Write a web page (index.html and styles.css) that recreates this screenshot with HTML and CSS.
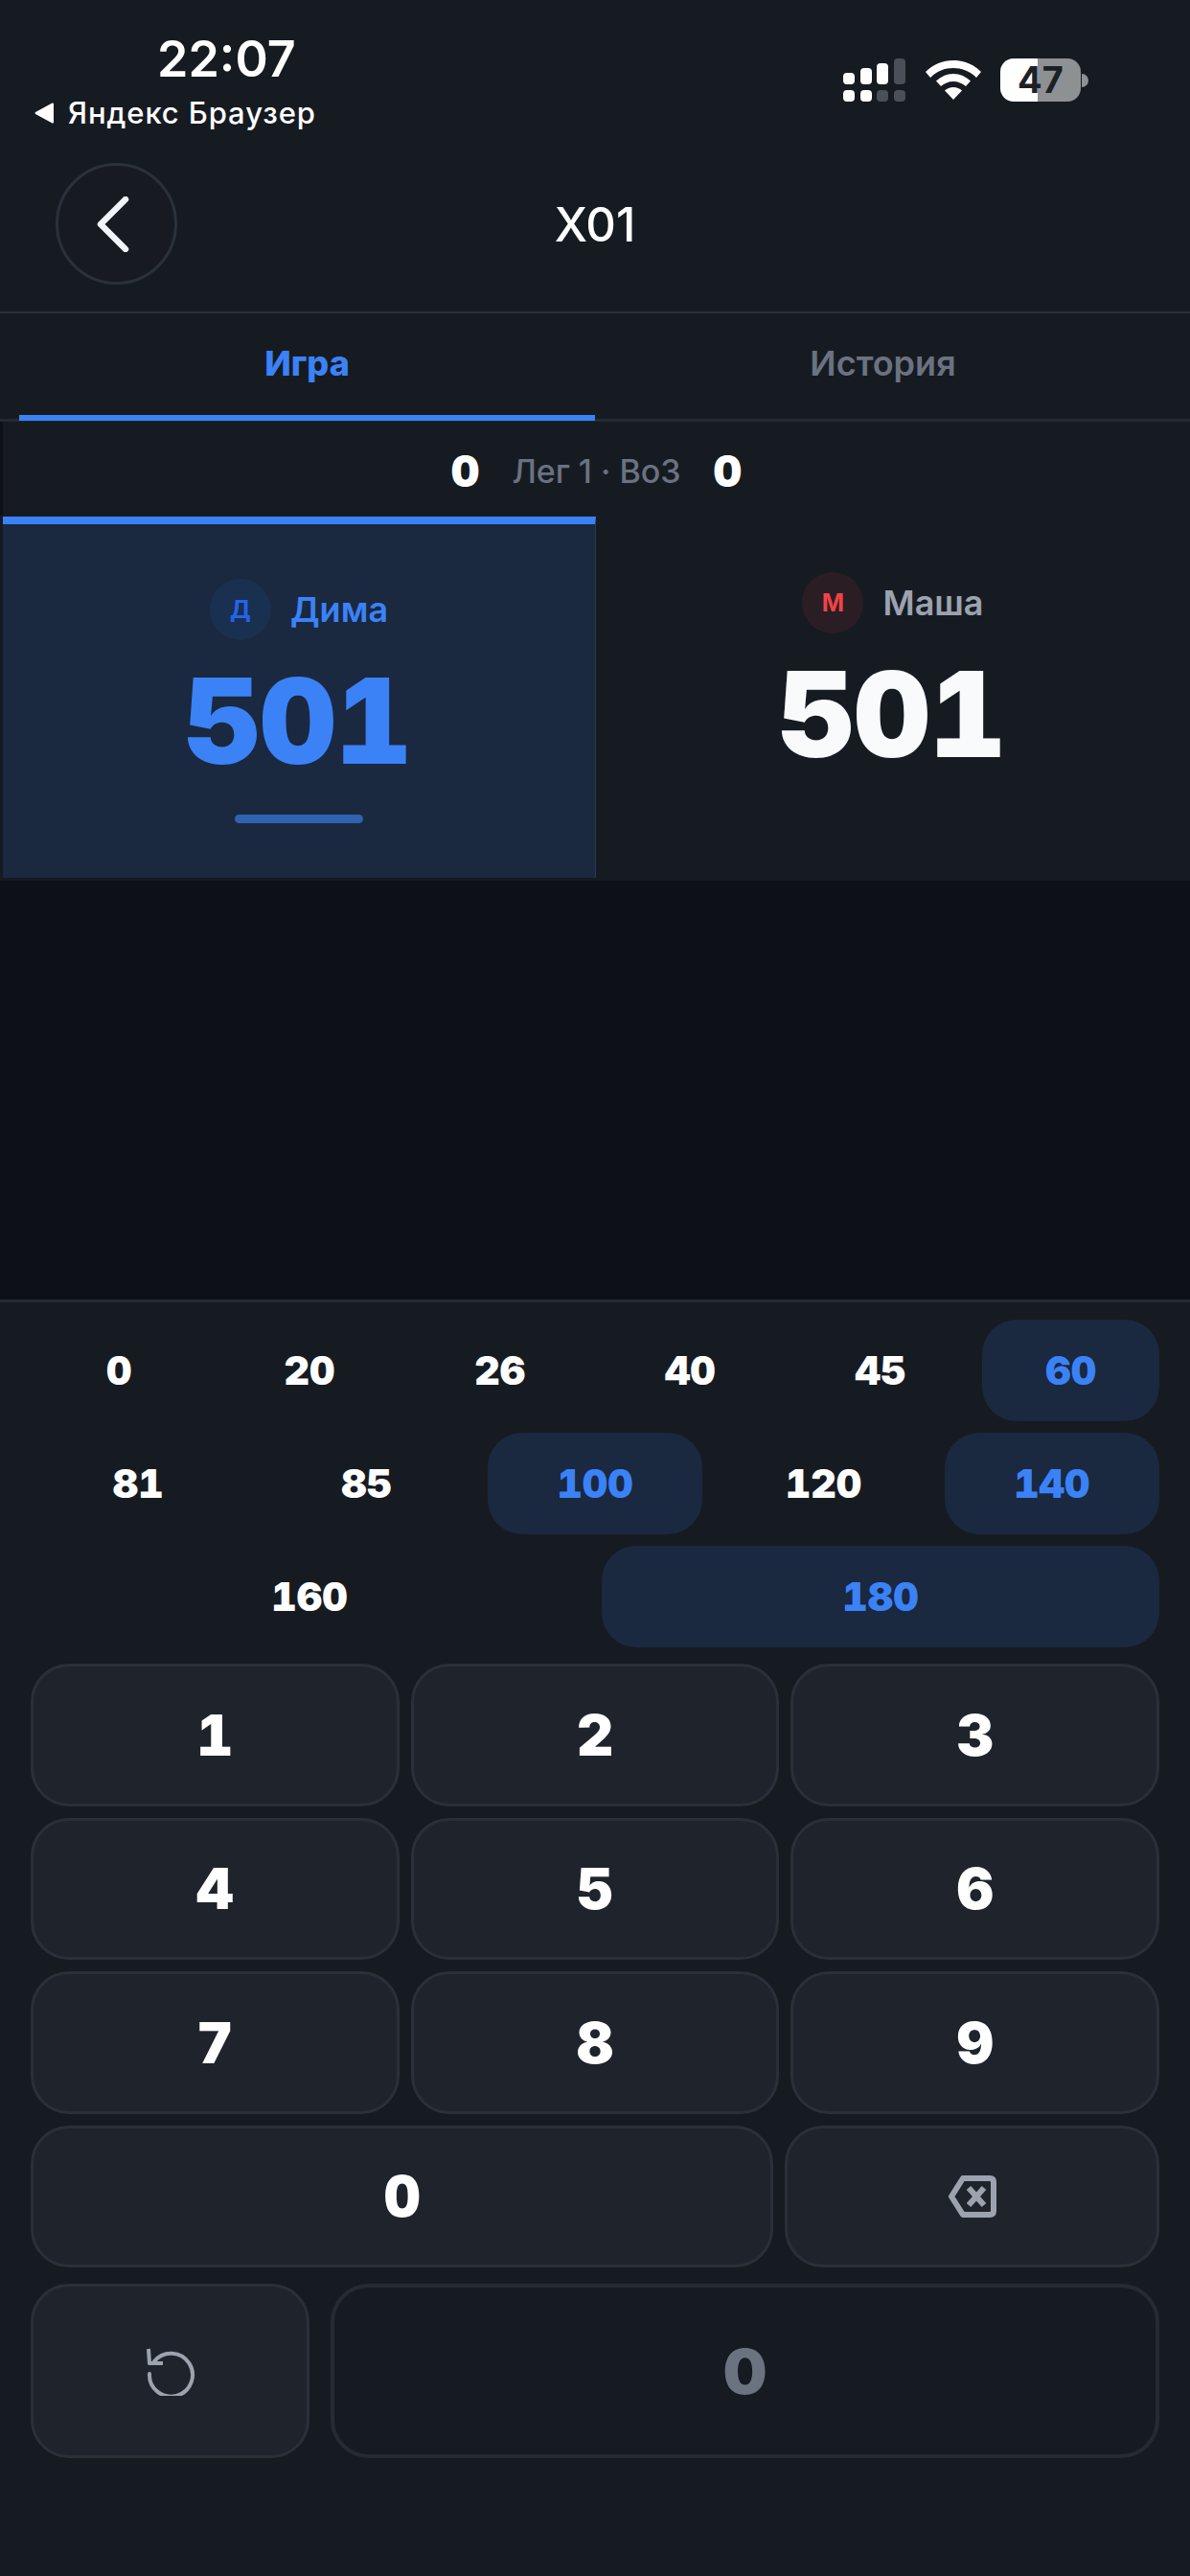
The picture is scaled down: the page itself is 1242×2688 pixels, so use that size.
FILE: index.html
```html
<!DOCTYPE html>
<html lang="ru">
<head>
    <meta charset="UTF-8">
    <meta name="viewport" content="width=device-width, initial-scale=1.0">
    <title>X01</title>
    <link rel="stylesheet" href="styles.css">
</head>
<body>
    <div class="status-bar">
        <div class="status-left">
            <div class="clock">22:07</div>
            <div class="back-app">
                <svg class="back-app-arrow" width="21" height="22" viewBox="0 0 21 22"><path d="M19 1.5 V20.5 L1.5 11 Z" fill="#fff" stroke="#fff" stroke-width="2" stroke-linejoin="round"/></svg>
                <span>Яндекс Браузер</span>
            </div>
        </div>
        <div class="status-icons">
            <svg width="66" height="46" viewBox="0 0 66 46">
                <rect x="0" y="15" width="12" height="12" rx="4" fill="#fff"/>
                <rect x="18" y="10" width="12" height="17" rx="4" fill="#fff"/>
                <rect x="35" y="5" width="12" height="22" rx="4" fill="#fff"/>
                <rect x="53" y="0" width="12" height="27" rx="4" fill="#4a4f58"/>
                <rect x="0" y="33" width="12" height="12" rx="4" fill="#fff"/>
                <rect x="18" y="33" width="12" height="12" rx="4" fill="#fff"/>
                <rect x="35" y="33" width="12" height="12" rx="4" fill="#4a4f58"/>
                <rect x="53" y="33" width="12" height="12" rx="4" fill="#4a4f58"/>
            </svg>
            <svg class="wifi" width="58" height="41" viewBox="0 0 58 41">
                <path d="M29 0 C40 0 50 4 58 12 L53 18 C46 11 38 8 29 8 C20 8 12 11 5 18 L0 12 C8 4 18 0 29 0 Z" fill="#fff"/>
                <path d="M29 14 C36 14 42 17 47 21.5 L42 27 C38.5 24 34 22 29 22 C24 22 19.5 24 16 27 L11 21.5 C16 17 22 14 29 14 Z" fill="#fff"/>
                <path d="M29 28 C32.5 28 35.5 29.3 38 31.5 L29 41 L20 31.5 C22.5 29.3 25.5 28 29 28 Z" fill="#fff"/>
            </svg>
            <div class="battery">
                <div class="battery-body"><span>47</span></div>
                <div class="battery-nub"></div>
            </div>
        </div>
    </div>

    <div class="nav">
        <div class="back-btn">
            <svg width="40" height="58" viewBox="0 0 40 58"><path d="M33 3 L7 29 L33 55" fill="none" stroke="#f1f5f9" stroke-width="6.5" stroke-linecap="round" stroke-linejoin="round"/></svg>
        </div>
        <div class="nav-title">X01</div>
    </div>

    <div class="tabs">
        <div class="tab tab-active">Игра</div>
        <div class="tab">История</div>
    </div>

    <div class="legs">
        <span class="legs-num">0</span>
        <span class="legs-label">Лег 1 · Bo3</span>
        <span class="legs-num">0</span>
    </div>

    <div class="players">
        <div class="player player-active">
            <div class="player-head">
                <div class="avatar avatar-blue">Д</div>
                <div class="player-name">Дима</div>
            </div>
            <div class="player-score">501</div>
            <div class="player-bar"></div>
        </div>
        <div class="player">
            <div class="player-head">
                <div class="avatar avatar-red">М</div>
                <div class="player-name">Маша</div>
            </div>
            <div class="player-score">501</div>
        </div>
    </div>

    <div class="spacer"></div>

    <div class="keypad">
        <div class="quick-row">
            <div class="quick">0</div>
            <div class="quick">20</div>
            <div class="quick">26</div>
            <div class="quick">40</div>
            <div class="quick">45</div>
            <div class="quick quick-hot">60</div>
        </div>
        <div class="quick-row">
            <div class="quick">81</div>
            <div class="quick">85</div>
            <div class="quick quick-hot">100</div>
            <div class="quick">120</div>
            <div class="quick quick-hot">140</div>
        </div>
        <div class="quick-row">
            <div class="quick">160</div>
            <div class="quick quick-hot">180</div>
        </div>

        <div class="num-grid">
            <div class="key">1</div>
            <div class="key">2</div>
            <div class="key">3</div>
            <div class="key">4</div>
            <div class="key">5</div>
            <div class="key">6</div>
            <div class="key">7</div>
            <div class="key">8</div>
            <div class="key">9</div>
        </div>
        <div class="zero-row">
            <div class="key key-zero">0</div>
            <div class="key key-back">
                <svg width="50" height="44" viewBox="0 0 50 44">
                    <path d="M15 3 H43 Q47 3 47 7 V37 Q47 41 43 41 H15 L3 22 Z" fill="none" stroke="#9ca3af" stroke-width="6" stroke-linejoin="round"/>
                    <path d="M21 13 L37 31 M37 13 L21 31" fill="none" stroke="#9ca3af" stroke-width="6"/>
                </svg>
            </div>
        </div>
        <div class="action-row">
            <div class="key key-undo">
                <svg width="52" height="52" viewBox="0 0 52 52">
                    <path d="M9 16 A22.5 22.5 0 1 1 4 29" fill="none" stroke="#9ca3af" stroke-width="4" stroke-linecap="round"/>
                    <path d="M3 3 L4 18 L18 18" fill="none" stroke="#9ca3af" stroke-width="4" stroke-linejoin="round"/>
                </svg>
            </div>
            <div class="display">0</div>
        </div>
    </div>
</body>
</html>
```

FILE: styles.css
```css
* {
    box-sizing: border-box;
}

body {
    font-family: Inter, "Noto Sans", sans-serif;
    background-color: #161b22;
    color: #fff;
    margin: 0;
    width: 1242px;
    height: 2688px;
    display: flex;
    flex-direction: column;
}

/* status bar */
.status-bar {
    height: 170px;
    padding: 32px 0 0 36px;
    display: flex;
    justify-content: space-between;
    flex-shrink: 0;
}

.clock {
    font-size: 52px;
    line-height: 60px;
    font-weight: 600;
    margin-left: 128px;
}

.back-app {
    display: flex;
    align-items: center;
    gap: 14px;
    font-size: 31px;
    line-height: 40px;
    font-weight: 500;
    letter-spacing: 0.9px;
    margin-top: 6px;
}

.status-icons {
    display: flex;
    align-items: flex-start;
    padding: 29px 106px 0 0;
}

.wifi {
    margin: 2px 20px 0 20px;
}

.battery {
    display: flex;
    align-items: center;
}

.battery-body {
    width: 84px;
    height: 45px;
    border-radius: 14px;
    background: linear-gradient(to right, #fff 46%, #8e9194 46%);
    color: #1c2027;
    font-size: 38px;
    line-height: 45px;
    font-weight: 700;
    text-align: center;
}

.battery-nub {
    width: 7px;
    height: 14px;
    margin-left: 1px;
    background-color: #8e9194;
    border-radius: 0 7px 7px 0;
}

/* nav */
.nav {
    height: 157px;
    padding-left: 58px;
    border-bottom: 2px solid #2a2f37;
    position: relative;
    flex-shrink: 0;
}

.back-btn {
    width: 127px;
    height: 127px;
    border-radius: 50%;
    border: 3px solid #2a313b;
    background-color: #171b21;
    display: flex;
    align-items: center;
    justify-content: center;
    padding-right: 8px;
}

.nav-title {
    position: absolute;
    left: 0;
    right: 0;
    top: 41px;
    text-align: center;
    font-size: 49px;
    line-height: 48px;
    font-weight: 500;
}

/* tabs */
.tabs {
    height: 113px;
    display: flex;
    padding-left: 20px;
    border-bottom: 3px solid #252a32;
    flex-shrink: 0;
}

.tab {
    width: 601px;
    font-size: 36px;
    font-weight: 600;
    color: #6b7280;
    text-align: center;
    padding-top: 31px;
    line-height: 42px;
}

.tab:last-child {
    flex: 1;
    padding-right: 20px;
}

.tab-active {
    height: 112px;
    font-weight: 800;
    color: #3b82f6;
    border-bottom: 6px solid #3b82f6;
}

/* leg counter */
.legs {
    height: 98px;
    padding-top: 4px;
    display: flex;
    align-items: center;
    justify-content: center;
    gap: 34px;
    border-left: 3px solid #0d1117;
    flex-shrink: 0;
}

.legs-num {
    font-size: 46px;
    font-weight: 900;
    font-variant-numeric: tabular-nums;
}

.legs-label {
    font-size: 34px;
    font-weight: 500;
    color: #6b7280;
}

/* players */
.players {
    height: 381px;
    display: flex;
    padding: 1px 0 3px 3px;
    flex-shrink: 0;
}

.player {
    flex: 1;
    padding-top: 58px;
    display: flex;
    flex-direction: column;
    align-items: center;
}

.player-active {
    flex: none;
    width: 619px;
    background-color: #1a2840;
    border-top: 8px solid #3b82f6;
    border-right: 1px solid #2a3a50;
    padding-top: 57px;
}

.player-head {
    display: flex;
    align-items: center;
    gap: 20px;
    height: 64px;
}

.avatar {
    width: 64px;
    height: 64px;
    border-radius: 50%;
    display: flex;
    align-items: center;
    justify-content: center;
    font-size: 25px;
    font-weight: 700;
}

.avatar-blue {
    background-color: #1a3050;
    color: #2563eb;
}

.avatar-red {
    background-color: #2a1e24;
    color: #ef4444;
}

.player-name {
    font-size: 36px;
    font-weight: 600;
    color: #9ca3af;
}

.player-active .player-name {
    color: #3b82f6;
}

.player-score {
    font-size: 124px;
    line-height: 124px;
    font-weight: 900;
    letter-spacing: -1px;
    font-variant-numeric: tabular-nums;
    margin-top: 22px;
    padding-right: 3px;
    color: #f8fafc;
}

.player-active .player-score {
    color: #3b82f6;
}

.player-bar {
    width: 134px;
    height: 9px;
    border-radius: 5px;
    background-color: #2f62b0;
    margin-top: 36px;
}

.spacer {
    flex: 1;
    background-color: #0d1117;
}

/* keypad */
.keypad {
    height: 1332px;
    flex-shrink: 0;
    border-top: 3px solid #262b33;
    padding: 18px 32px 0;
}

.quick-row {
    display: flex;
    gap: 14px;
    margin-bottom: 12px;
}

.quick {
    flex: 1;
    height: 106px;
    border-radius: 36px;
    display: flex;
    align-items: center;
    justify-content: center;
    font-size: 41px;
    font-weight: 900;
    font-variant-numeric: tabular-nums;
}

.quick-hot {
    background-color: #1a2840;
    color: #3b82f6;
}

.num-grid {
    display: grid;
    grid-template-columns: repeat(3, 1fr);
    gap: 12px;
    margin-top: 17px;
}

.key {
    height: 148.5px;
    border: 3px solid #2a3038;
    border-radius: 40px;
    background-color: #1f242c;
    display: flex;
    align-items: center;
    justify-content: center;
    font-size: 59px;
    font-weight: 900;
    font-variant-numeric: tabular-nums;
}

.zero-row {
    display: flex;
    gap: 12px;
    margin-top: 12px;
}

.key-zero {
    flex: 2;
}

.key-back {
    flex: 1;
}

.action-row {
    display: flex;
    gap: 22px;
    margin-top: 17px;
}

.key-undo {
    width: 291px;
    height: 182px;
}

.display {
    flex: 1;
    height: 182px;
    border: 4px solid #262b33;
    border-radius: 40px;
    display: flex;
    align-items: center;
    justify-content: center;
    font-size: 65px;
    font-weight: 900;
    color: #6b7280;
}
```
